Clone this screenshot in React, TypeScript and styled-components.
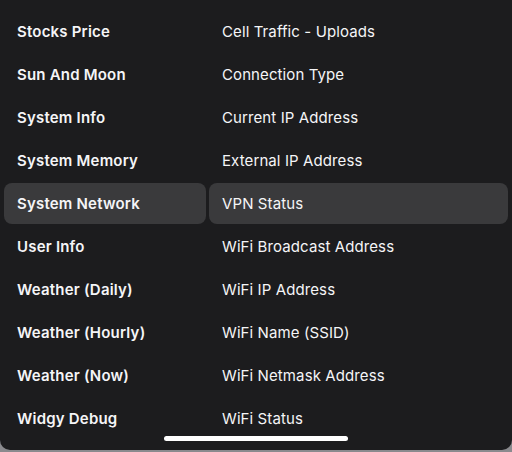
import styled, { createGlobalStyle } from "styled-components"

const GlobalStyle = createGlobalStyle`
  html, body {
    margin: 0;
    padding: 0;
    background: #8a8a8e;
  }
  body {
    font-family: Inter, "Noto Sans", sans-serif;
    -webkit-font-smoothing: antialiased;
  }
`

const widgets = [
  "Stocks Price",
  "Sun And Moon",
  "System Info",
  "System Memory",
  "System Network",
  "User Info",
  "Weather (Daily)",
  "Weather (Hourly)",
  "Weather (Now)",
  "Widgy Debug",
]

const fields = [
  "Cell Traffic - Uploads",
  "Connection Type",
  "Current IP Address",
  "External IP Address",
  "VPN Status",
  "WiFi Broadcast Address",
  "WiFi IP Address",
  "WiFi Name (SSID)",
  "WiFi Netmask Address",
  "WiFi Status",
]

const selected = 4

export default function App() {
  return (
    <>
      <GlobalStyle />
      <Panel>
        <Columns>
          <Column>
            {widgets.map((w, i) => (
              <Item key={w} $active={i === selected} $bold>
                {w}
              </Item>
            ))}
          </Column>
          <Column>
            {fields.map((f, i) => (
              <Item key={f} $active={i === selected}>
                {f}
              </Item>
            ))}
          </Column>
        </Columns>
        <HomeIndicator />
      </Panel>
    </>
  )
}

const Panel = styled.div`
  width: 512px;
  height: 450px;
  background: #1c1c1e;
  border-radius: 0 0 10px 10px;
  position: relative;
  overflow: hidden;
`

const Columns = styled.div`
  display: grid;
  grid-template-columns: 202px 1fr;
  column-gap: 3px;
  padding: 10px 4px 0 4px;
`

const Column = styled.div`
  display: flex;
  flex-direction: column;
`

const Item = styled.div<{ $active?: boolean; $bold?: boolean }>`
  height: 41px;
  margin: 1px 0;
  padding-left: 13px;
  display: flex;
  align-items: center;
  border-radius: 8px;
  background: ${(p) => (p.$active ? "#3a3a3c" : "transparent")};
  color: #f5f5f7;
  font-size: 15px;
  font-weight: ${(p) => (p.$bold ? 600 : 400)};
  letter-spacing: ${(p) => (p.$bold ? "0.2px" : "0.1px")};
  white-space: nowrap;
`

const HomeIndicator = styled.div`
  position: absolute;
  left: 164px;
  bottom: 9px;
  width: 184px;
  height: 5px;
  border-radius: 3px;
  background: #ffffff;
`
